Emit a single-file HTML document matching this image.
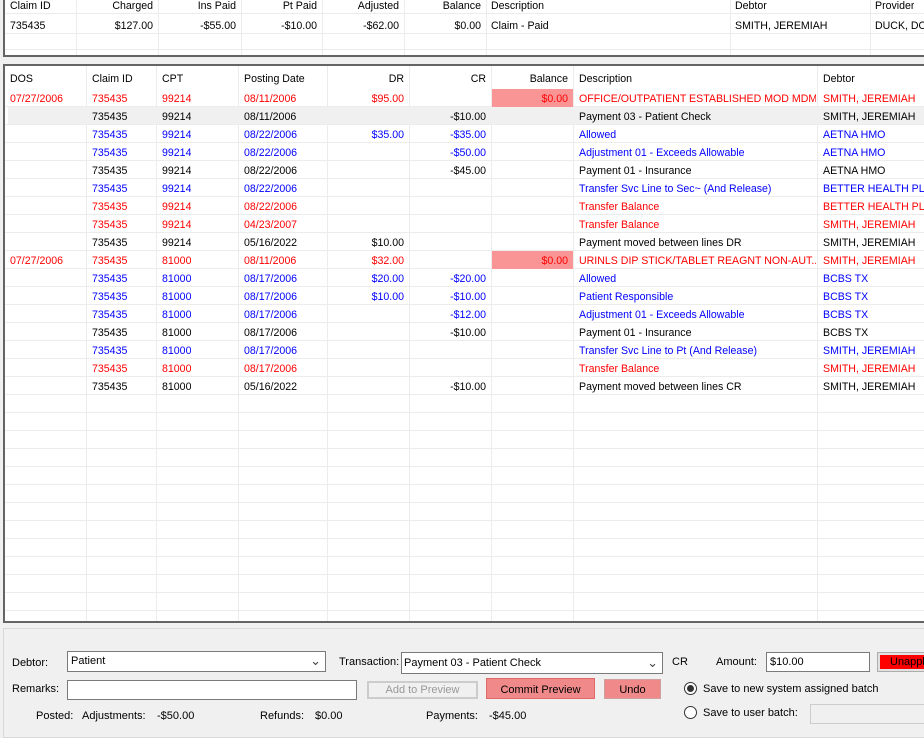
<!DOCTYPE html>
<html><head><meta charset="utf-8"><style>
*{margin:0;padding:0;box-sizing:border-box}
body{width:924px;height:729px;overflow:hidden;background:#f0f0f0;font-family:"Liberation Sans",sans-serif;font-size:11px;color:#000;position:relative}
.a{position:absolute;white-space:nowrap}
.grid{position:absolute;background:#fff;border:2px solid #646464;border-right:none;overflow:hidden;font-size:10.6px}
.vl{position:absolute;top:0;bottom:0;width:1px;background:#ececec}
.hl{position:absolute;left:0;right:0;height:1px;background:#ececec}
.c{position:absolute;line-height:18px;height:18px;white-space:nowrap;overflow:hidden}
.r{text-align:right}
.red{color:#f00}.blu{color:#00f}
.box{position:absolute;background:#fff;border:1px solid #7a7a7a}
.btn{position:absolute;text-align:center;line-height:18px}
</style></head><body>

<div class="grid" style="left:3px;top:-4px;width:921px;height:61px">
 <div class="vl" style="left:71px"></div><div class="vl" style="left:153px"></div><div class="vl" style="left:236px"></div><div class="vl" style="left:317px"></div><div class="vl" style="left:399px"></div><div class="vl" style="left:481px"></div><div class="vl" style="left:725px"></div><div class="vl" style="left:865px"></div>
 <div class="hl" style="top:15px"></div><div class="hl" style="top:35px"></div><div class="hl" style="top:51px"></div>
 <div class="c" style="left:5px;top:-1px">Claim ID</div>
 <div class="c r" style="left:71px;width:77px;top:-1px">Charged</div>
 <div class="c r" style="left:153px;width:78px;top:-1px">Ins Paid</div>
 <div class="c r" style="left:236px;width:76px;top:-1px">Pt Paid</div>
 <div class="c r" style="left:317px;width:77px;top:-1px">Adjusted</div>
 <div class="c r" style="left:399px;width:77px;top:-1px">Balance</div>
 <div class="c" style="left:486px;top:-1px">Description</div>
 <div class="c" style="left:730px;top:-1px">Debtor</div>
 <div class="c" style="left:870px;top:-1px">Provider</div>
 <div class="c" style="left:5px;top:19px">735435</div>
 <div class="c r" style="left:71px;width:77px;top:19px">$127.00</div>
 <div class="c r" style="left:153px;width:78px;top:19px">-$55.00</div>
 <div class="c r" style="left:236px;width:76px;top:19px">-$10.00</div>
 <div class="c r" style="left:317px;width:77px;top:19px">-$62.00</div>
 <div class="c r" style="left:399px;width:77px;top:19px">$0.00</div>
 <div class="c" style="left:486px;top:19px">Claim - Paid</div>
 <div class="c" style="left:730px;top:19px">SMITH, JEREMIAH</div>
 <div class="c" style="left:870px;top:19px">DUCK, DO</div>
</div>

<div class="grid" style="left:3px;top:64px;width:921px;height:559px" id="g">
 <div class="vl" style="left:81px"></div><div class="vl" style="left:151px"></div><div class="vl" style="left:233px"></div><div class="vl" style="left:322px"></div><div class="vl" style="left:404px"></div><div class="vl" style="left:486px"></div><div class="vl" style="left:568px"></div><div class="vl" style="left:812px"></div>
 <div class="c" style="left:5px;top:4px">DOS</div>
 <div class="c" style="left:87px;top:4px">Claim ID</div>
 <div class="c" style="left:157px;top:4px">CPT</div>
 <div class="c" style="left:239px;top:4px">Posting Date</div>
 <div class="c r" style="left:322px;width:77px;top:4px">DR</div>
 <div class="c r" style="left:404px;width:77px;top:4px">CR</div>
 <div class="c r" style="left:486px;width:77px;top:4px">Balance</div>
 <div class="c" style="left:574px;top:4px">Description</div>
 <div class="c" style="left:818px;top:4px">Debtor</div>
 <div id="rows"></div>
</div>
<script>
var R=[
["red","07/27/2006","735435","99214","08/11/2006","$95.00","","$0.00","OFFICE/OUTPATIENT ESTABLISHED MOD MDM...","SMITH, JEREMIAH"],
["sel","","735435","99214","08/11/2006","","-$10.00","","Payment 03 - Patient Check","SMITH, JEREMIAH"],
["blu","","735435","99214","08/22/2006","$35.00","-$35.00","","Allowed","AETNA HMO"],
["blu","","735435","99214","08/22/2006","","-$50.00","","Adjustment 01 - Exceeds Allowable","AETNA HMO"],
["","","735435","99214","08/22/2006","","-$45.00","","Payment 01 - Insurance","AETNA HMO"],
["blu","","735435","99214","08/22/2006","","","","Transfer Svc Line to Sec~ (And Release)","BETTER HEALTH PLAN"],
["red","","735435","99214","08/22/2006","","","","Transfer Balance","BETTER HEALTH PLAN"],
["red","","735435","99214","04/23/2007","","","","Transfer Balance","SMITH, JEREMIAH"],
["","","735435","99214","05/16/2022","$10.00","","","Payment moved between lines DR","SMITH, JEREMIAH"],
["red","07/27/2006","735435","81000","08/11/2006","$32.00","","$0.00","URINLS DIP STICK/TABLET REAGNT NON-AUT...","SMITH, JEREMIAH"],
["blu","","735435","81000","08/17/2006","$20.00","-$20.00","","Allowed","BCBS TX"],
["blu","","735435","81000","08/17/2006","$10.00","-$10.00","","Patient Responsible","BCBS TX"],
["blu","","735435","81000","08/17/2006","","-$12.00","","Adjustment 01 - Exceeds Allowable","BCBS TX"],
["","","735435","81000","08/17/2006","","-$10.00","","Payment 01 - Insurance","BCBS TX"],
["blu","","735435","81000","08/17/2006","","","","Transfer Svc Line to Pt (And Release)","SMITH, JEREMIAH"],
["red","","735435","81000","08/17/2006","","","","Transfer Balance","SMITH, JEREMIAH"],
["","","735435","81000","05/16/2022","","-$10.00","","Payment moved between lines CR","SMITH, JEREMIAH"]];
var h="";
for(var i=0;i<30;i++){h+='<div class="hl" style="top:'+(40+i*18)+'px"></div>';}
R.forEach(function(r,i){var t=23+i*18;var ty=t+1;var cl=r[0]=="sel"?"":r[0];
if(r[0]=="sel")h+='<div style="position:absolute;left:3px;right:0;top:'+t+'px;height:17px;background:#f0f0f0"></div>';
if(r[7])h+='<div style="position:absolute;left:487px;width:81px;top:'+t+'px;height:18px;background:#f99595"></div>';
h+='<div class="c '+cl+'" style="left:5px;top:'+ty+'px">'+r[1]+'</div>';
h+='<div class="c '+cl+'" style="left:87px;top:'+ty+'px">'+r[2]+'</div>';
h+='<div class="c '+cl+'" style="left:157px;top:'+ty+'px">'+r[3]+'</div>';
h+='<div class="c '+cl+'" style="left:239px;top:'+ty+'px">'+r[4]+'</div>';
h+='<div class="c r '+cl+'" style="left:322px;width:77px;top:'+ty+'px">'+r[5]+'</div>';
h+='<div class="c r '+cl+'" style="left:404px;width:77px;top:'+ty+'px">'+r[6]+'</div>';
h+='<div class="c r '+cl+'" style="left:486px;width:77px;top:'+ty+'px">'+r[7]+'</div>';
h+='<div class="c '+cl+'" style="left:574px;width:237px;top:'+ty+'px">'+r[8]+'</div>';
h+='<div class="c '+cl+'" style="left:818px;top:'+ty+'px">'+r[9]+'</div>';});
document.getElementById("rows").innerHTML=h;
</script>

<div style="position:absolute;left:3px;top:628px;width:930px;height:110px;border:1px solid #d9d9d9;background:#f0f0f0"></div>
<div class="a" style="left:12px;top:657px">Debtor:</div>
<div class="box" style="left:67px;top:651px;width:259px;height:21px;padding:3px 3px">Patient<span style="position:absolute;right:4px;top:1px;color:#444;font-size:13px">&#8964;</span></div>
<div class="a" style="left:339px;top:656px">Transaction:</div>
<div class="box" style="left:401px;top:652px;width:262px;height:22px;padding:4px 2px">Payment 03 - Patient Check<span style="position:absolute;right:4px;top:2px;color:#444;font-size:13px">&#8964;</span></div>
<div class="a" style="left:672px;top:656px">CR</div>
<div class="a" style="left:716px;top:656px">Amount:</div>
<div class="box" style="left:766px;top:652px;width:104px;height:20px;padding:3px 3px">$10.00</div>
<div style="position:absolute;left:877px;top:652px;width:60px;height:20px;border:1px solid #adadad;background:#e1e1e1"><div style="position:absolute;left:2px;top:2px;right:0;bottom:2px;background:#f00;padding:1px 10px;overflow:hidden;white-space:nowrap">Unapplied</div></div>
<div class="a" style="left:12px;top:683px">Remarks:</div>
<div class="box" style="left:67px;top:680px;width:290px;height:20px"></div>
<div class="btn" style="left:367px;top:681px;width:111px;height:18px;border:2px solid #ccc;background:#f0f0f0;color:#999;line-height:14px">Add to Preview</div>
<div class="btn" style="left:486px;top:678px;width:109px;height:21px;border:1px solid #e06868;background:#f08a8a;line-height:22px">Commit Preview</div>
<div class="btn" style="left:604px;top:679px;width:57px;height:20px;border:1px solid #d0a0a0;background:#f08a8a;line-height:20px">Undo</div>
<div style="position:absolute;left:684px;top:682px;width:13px;height:13px;border:1px solid #333;border-radius:50%;background:#fff"><div style="position:absolute;left:2px;top:2px;width:7px;height:7px;border-radius:50%;background:#333"></div></div>
<div class="a" style="left:703px;top:683px">Save to new system assigned batch</div>
<div style="position:absolute;left:684px;top:706px;width:13px;height:13px;border:1px solid #333;border-radius:50%;background:#fff"></div>
<div class="a" style="left:703px;top:707px">Save to user batch:</div>
<div style="position:absolute;left:810px;top:704px;width:120px;height:20px;border:1px solid #ccc;background:#f0f0f0"></div>
<div class="a" style="left:36px;top:710px">Posted:</div>
<div class="a" style="left:82px;top:710px">Adjustments:</div>
<div class="a" style="left:157px;top:710px">-$50.00</div>
<div class="a" style="left:260px;top:710px">Refunds:</div>
<div class="a" style="left:315px;top:710px">$0.00</div>
<div class="a" style="left:426px;top:710px">Payments:</div>
<div class="a" style="left:489px;top:710px">-$45.00</div>
</body></html>
